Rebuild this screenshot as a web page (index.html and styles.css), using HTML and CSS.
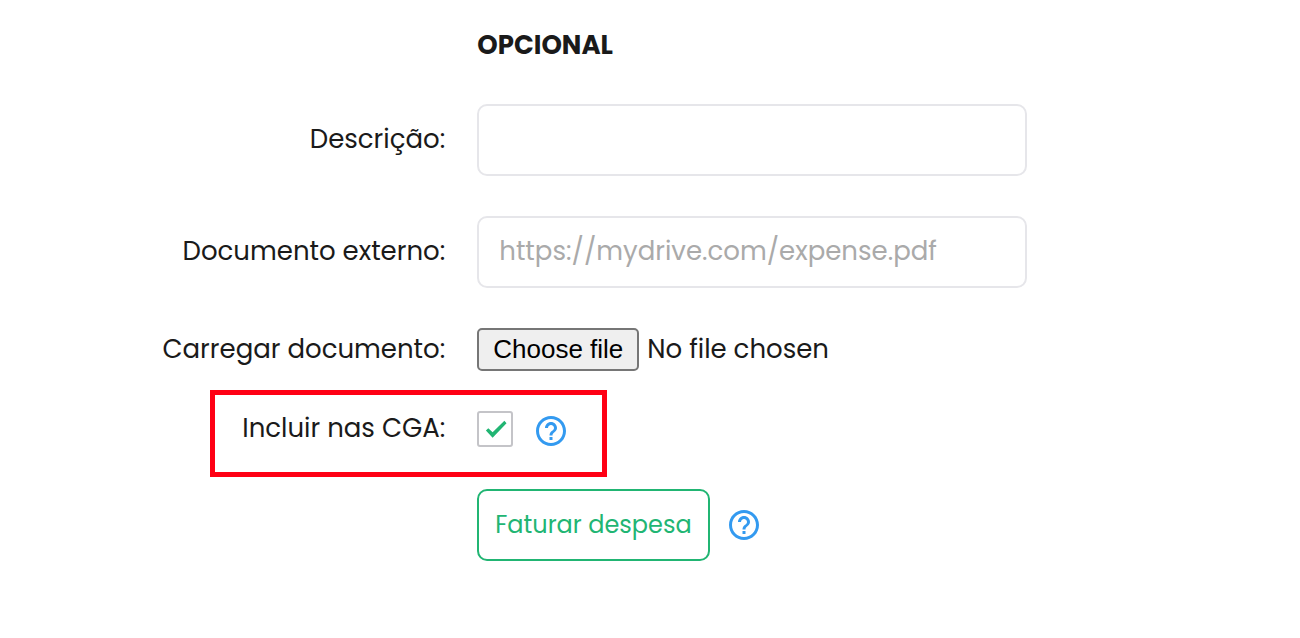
FILE: index.html
```html
<!DOCTYPE html>
<html lang="pt">
<head>
  <meta charset="UTF-8" />
  <meta name="viewport" content="width=device-width, initial-scale=1.0" />
  <title>Despesa</title>
  <link rel="stylesheet" href="styles.css">
</head>
<body>
  <form class="expense-form">
    <div class="row">
      <h2 class="title">OPCIONAL</h2>
    </div>

    <div class="row">
      <label class="label" for="description">Descrição:</label>
      <input class="text-input" type="text" id="description" />
    </div>

    <div class="row">
      <label class="label" for="external">Documento externo:</label>
      <input class="text-input" type="text" id="external" placeholder="https://mydrive.com/expense.pdf" />
    </div>

    <div class="row">
      <label class="label" for="upload">Carregar documento:</label>
      <div class="file-field">
        <input class="file-input" type="file" id="upload" />
        <label class="file-button" for="upload">Choose file</label>
        <span class="file-name">No file chosen</span>
      </div>
    </div>

    <div class="row row-check">
      <label class="label" for="include">Incluir nas CGA:</label>
      <div class="check-field">
        <input class="checkbox" type="checkbox" id="include" checked />
        <a class="help" href="#" aria-label="Ajuda">
          <svg viewBox="0 0 24 24"><path d="M11 18h2v-2h-2v2zm1-16C6.48 2 2 6.48 2 12s4.48 10 10 10 10-4.480 10-10S17.520 2 12 2zm0 18c-4.410 0-8-3.590-8-8s3.590-8 8-8 8 3.590 8 8-3.590 8-8 8zm0-14c-2.210 0-4 1.790-4 4h2c0-1.100.9-2 2-2s2 .9 2 2c0 2-3 1.750-3 5h2c0-2.250 3-2.500 3-5 0-2.210-1.790-4-4-4z"/></svg>
        </a>
        <span class="highlight"></span>
      </div>
    </div>

    <div class="row">
      <div class="actions">
        <button class="submit" type="button">Faturar despesa</button>
        <a class="help" href="#" aria-label="Ajuda">
          <svg viewBox="0 0 24 24"><path d="M11 18h2v-2h-2v2zm1-16C6.48 2 2 6.48 2 12s4.48 10 10 10 10-4.480 10-10S17.520 2 12 2zm0 18c-4.410 0-8-3.590-8-8s3.590-8 8-8 8 3.590 8 8-3.590 8-8 8zm0-14c-2.210 0-4 1.790-4 4h2c0-1.100.9-2 2-2s2 .9 2 2c0 2-3 1.750-3 5h2c0-2.250 3-2.500 3-5 0-2.210-1.790-4-4-4z"/></svg>
        </a>
      </div>
    </div>
  </form>
</body>
</html>
```

FILE: styles.css
```css
* {
  box-sizing: border-box;
}
body {
  margin: 0;
  background: #fff;
  color: #1a1a1a;
  font-family: Poppins, Inter, sans-serif;
  font-size: 26px;
  line-height: 34px;
}
.expense-form {
  display: flex;
  flex-direction: column;
  gap: 40px;
  padding: 28px 0;
}
.row {
  display: grid;
  grid-template-columns: 34.25% minmax(0, 550px);
  column-gap: 32px;
  align-items: center;
}
.row > * {
  grid-column: 2;
}
.row > .label {
  grid-column: 1;
  padding-bottom: 2px;
  text-align: right;
}
.title {
  margin: 0;
  padding-bottom: 2px;
  font-size: 26px;
  font-weight: 700;
}
.text-input {
  width: 100%;
  height: 72px;
  padding: 0 20px 2px;
  border: 2px solid #e6e6ea;
  border-radius: 10px;
  background: #fff;
  color: #1a1a1a;
  font: inherit;
}
.text-input::placeholder {
  color: #aaa;
}
.file-field {
  display: flex;
  align-items: center;
  gap: 8px;
  position: relative;
}
.file-input {
  position: absolute;
  width: 1px;
  height: 1px;
  opacity: 0;
}
.file-button {
  padding: 2px 14px 3px;
  border: 2px solid #767676;
  border-radius: 5px;
  background: #efefef;
  color: #000;
  font-family: "Liberation Sans", Arial, sans-serif;
  cursor: pointer;
}
.file-name {
  padding-bottom: 2px;
}
.row-check {
  align-items: start;
}
.check-field {
  display: flex;
  align-items: flex-start;
  gap: 20px;
  height: 38px;
  position: relative;
}
.checkbox {
  appearance: none;
  display: grid;
  place-items: center;
  width: 36px;
  height: 36px;
  margin: 0;
  border: 2px solid #c4c4c8;
  border-radius: 3px;
  background: #fff;
}
.checkbox:checked::before {
  content: "";
  width: 24px;
  height: 18px;
  background: #21b573;
  clip-path: polygon(11% 59%, 21% 46%, 39% 68%, 88% 4%, 97% 18%, 39% 98%);
}
.help {
  width: 36px;
  height: 36px;
}
.help svg {
  display: block;
  fill: #339af0;
}
.check-field .help {
  align-self: flex-end;
}
/* red frame around the CGA option */
.highlight {
  position: absolute;
  top: -21px;
  left: -267px;
  width: 397px;
  height: 87px;
  border: 5px solid #ff0014;
  pointer-events: none;
}
.actions {
  display: flex;
  align-items: center;
  gap: 16px;
}
.submit {
  height: 72px;
  padding: 0 16px;
  border: 2px solid #21b573;
  border-radius: 10px;
  background: #fff;
  color: #21b573;
  font: inherit;
  font-size: 24px;
  cursor: pointer;
}
```
